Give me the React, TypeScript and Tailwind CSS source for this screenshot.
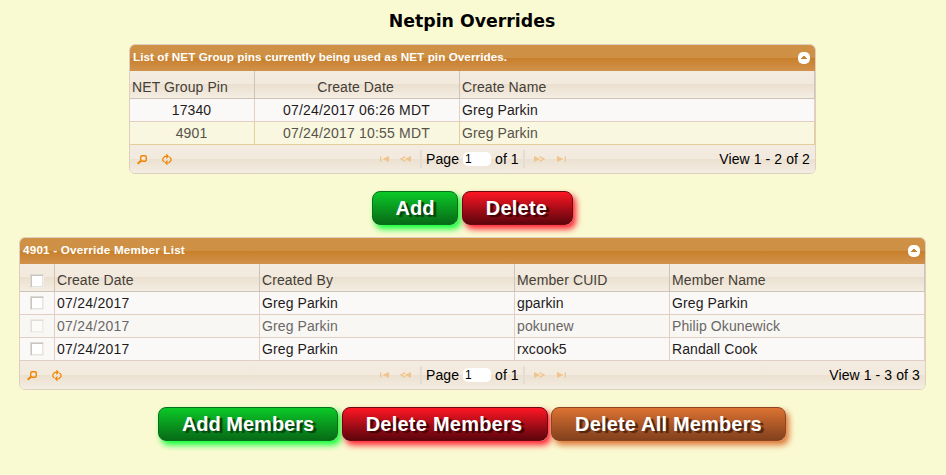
import type { ReactNode } from "react";

const SANS = "font-['Liberation_Sans',Arial,sans-serif]";

function CollapseIcon() {
  return (
    <svg className="h-3 w-3" viewBox="0 0 12 12">
      <rect width="12" height="12" rx="5" fill="#fff" />
      <path d="M3 7V6h1V5h1V4h2v1h1v1h1v1z" fill="#c9832f" />
    </svg>
  );
}

function SearchIcon() {
  return (
    <svg className="h-[11px] w-[11px]" viewBox="0 0 11 11" fill="none" stroke="#ef8403">
      <rect x="3.700" y="1.700" width="5.600" height="5.600" rx="1.500" strokeWidth="1.400" />
      <path d="M4 6.700L.7 9.700" strokeWidth="2" />
    </svg>
  );
}

function RefreshIcon() {
  return (
    <svg className="h-[11px] w-[10px]" viewBox="0 0 10 11" fill="none" stroke="#ef8403">
      <path
        d="M2.500 8.200L.8 6.500V4.500L2.800 2.300H6M4.300 .3L6.200 2.300L4.300 4.300M7.300 2.800L9 4.500V6.500L7 8.700H4M5.500 6.700L3.600 8.700L5.500 10.700"
        strokeWidth="1.150"
      />
    </svg>
  );
}

function FirstIcon({ flip = false }: { flip?: boolean }) {
  return (
    <svg className={flip ? "h-[6px] w-[9px] -scale-x-100" : "h-[6px] w-[9px]"} viewBox="0 0 9 6" fill="#f1c48d">
      <path d="M0 .5h1.300v5H0zM2.500 3L9 .1v5.800z" />
    </svg>
  );
}

function PrevIcon({ flip = false }: { flip?: boolean }) {
  return (
    <svg className={flip ? "h-[6px] w-[11px] -scale-x-100" : "h-[6px] w-[11px]"} viewBox="0 0 11 6">
      <path d="M5.500 .7L1 3l4.500 2.300" fill="none" stroke="#f1c48d" strokeWidth="1.300" />
      <path d="M4.800 3L11 .1v5.800z" fill="#f1c48d" />
    </svg>
  );
}

function Panel({ title, titleSpacing, width, children }: {
  title: string; titleSpacing: string; width: string; children: ReactNode;
}) {
  return (
    <section className={`${width} overflow-hidden rounded-md border border-[#dfcfc0] bg-[#fbf9f7]`}>
      <header className="flex h-[26px] items-center justify-between bg-[linear-gradient(#cf9145_0,#ce9044_50%,#c87f2a_50%,#d1924c_100%)] pl-[3px] pr-[5px] text-white">
        <span className={`pb-[3px] text-[11.7px] font-bold ${titleSpacing}`}>{title}</span>
        <CollapseIcon />
      </header>
      {children}
    </section>
  );
}

function HeaderRow({ children }: { children: ReactNode }) {
  return (
    <div className="flex h-7 border-b border-[#cdc3b7] bg-[linear-gradient(#f4ebe1_0,#f3eade_50%,#ebe0d0_50%,#f4ede2_100%)] text-[#453e37]">
      {children}
    </div>
  );
}

function Cell({ width, children, head = false, center = false, line = "border-[#e0cfc2]" }: {
  width: string; children?: ReactNode; head?: boolean; center?: boolean; line?: string;
}) {
  return (
    <div
      className={`${width} flex shrink-0 items-center whitespace-nowrap border-r pl-[2px] ${head ? "border-[#cdc3b7] pt-[5px]" : line} ${center ? "justify-center" : ""} ${center && head ? "pr-[5px]" : "pr-[3px]"}`}
    >
      {children}
    </div>
  );
}

function Box({ faded = false, place = "mb-px" }: { faded?: boolean; place?: string }) {
  return (
    <span
      className={`${place} block h-[14px] w-[14px] shrink-0 border border-b-[#f1eeea] border-r-[#f1eeea] bg-white shadow-[inset_1px_1px_0_#c9c6bf,inset_-1px_-1px_0_#e6e3dd] ${faded ? "border-l-[#e2dfda] border-t-[#e2dfda] opacity-50" : "border-l-[#dcd9d3] border-t-[#dcd9d3]"}`}
    />
  );
}

function Pager({ view, lead }: { view: string; lead: string }) {
  return (
    <footer className="flex h-7 items-center bg-[linear-gradient(#f4ebe1_0,#f3eade_50%,#ebe0d0_50%,#f4ede2_100%)] text-black">
      <div className="flex w-[120px] items-center gap-[14px] pl-[7px]">
        <SearchIcon />
        <RefreshIcon />
      </div>
      <div className={`${lead} flex items-center`}>
        <FirstIcon />
        <span className="ml-[11px]"><PrevIcon /></span>
        <span className="ml-[9px] h-[18px] w-[2px] bg-[#e4ddd4]" />
        <span className="ml-[4px] w-[37px]">Page</span>
        <span className="flex h-[14px] w-7 items-center rounded-[5px] bg-white pl-[2px] text-[12px]">1</span>
        <span className="ml-[4px] w-7">of 1</span>
        <span className="h-[18px] w-[2px] bg-[#e4ddd4]" />
        <span className="ml-[9px]"><PrevIcon flip /></span>
        <span className="ml-[12px]"><FirstIcon flip /></span>
      </div>
      <span className="ml-auto pr-[5px]">{view}</span>
    </footer>
  );
}

function Button({ children, look }: { children: ReactNode; look: string }) {
  return (
    <button className={`h-[34px] shrink-0 whitespace-nowrap rounded-lg border text-[20px] font-bold leading-8 text-white ${look}`}>
      {children}
    </button>
  );
}

const GREEN = "tracking-normal border-[#08701a] bg-linear-to-b from-[#0bc928] to-[#076b16] [text-shadow:3px_2px_1px_#064410] shadow-[3px_4px_6px_#0aff32]";
const RED = "pr-[2px] tracking-[0.23px] border-[#6b0712] bg-linear-to-b from-[#ff1624] to-[#5e050c] [text-shadow:3px_2px_1px_#3d0308] shadow-[3px_4px_6px_#ff1e30]";
const BROWN = "tracking-[0.17px] border-[#8d4620] bg-linear-to-b from-[#dc7333] to-[#83401d] [text-shadow:3px_2px_1px_#4d2510] shadow-[3px_4px_6px_#dc7333]";

const members = [
  ["07/24/2017", "Greg Parkin", "gparkin", "Greg Parkin"],
  ["07/24/2017", "Greg Parkin", "pokunew", "Philip Okunewick"],
  ["07/24/2017", "Greg Parkin", "rxcook5", "Randall Cook"],
];

export default function App() {
  return (
    <main className={`${SANS} h-[475px] w-[946px] overflow-hidden bg-[#fafad2] text-[14px] leading-[16px] tracking-[0.1px]`}>
      <h1 className="h-11 pr-[2px] pt-[9px] text-center font-['DejaVu_Sans',sans-serif] text-[17.330px] font-bold leading-6 tracking-normal text-black">
        Netpin Overrides
      </h1>
      <div className="pl-[129px]">
        <Panel title="List of NET Group pins currently being used as NET pin Overrides." titleSpacing="tracking-[0.060px]" width="w-[687px]">
          <HeaderRow>
            <Cell head width="w-[125px]">NET Group Pin</Cell>
            <Cell head center width="w-[205px]">Create Date</Cell>
            <Cell head width="w-[355px]">Create Name</Cell>
          </HeaderRow>
          <div className="flex h-[23px] border-b border-[#e0cfc2] text-[#1e1b1d]">
            <Cell center width="w-[125px]">17340</Cell>
            <Cell center width="w-[205px]"><span className="tracking-[0.18px]">07/24/2017 06:26 MDT</span></Cell>
            <Cell width="w-[355px]">Greg Parkin</Cell>
          </div>
          <div className="flex h-[23px] border-b border-[#e4cf9b] bg-[#f9f7df] text-[#57534a]">
            <Cell center width="w-[125px]" line="border-[#e4cf9b]">4901</Cell>
            <Cell center width="w-[205px]" line="border-[#e4cf9b]"><span className="tracking-[0.18px]">07/24/2017 10:55 MDT</span></Cell>
            <Cell width="w-[355px]" line="border-[#e4cf9b]">Greg Parkin</Cell>
          </div>
          <Pager view="View 1 - 2 of 2" lead="ml-[130px]" />
        </Panel>
      </div>
      <div className="flex h-[63px] gap-1 pl-[372px] pt-[17px]">
        <Button look={`w-[86px] ${GREEN}`}>Add</Button>
        <Button look={`w-[111px] ${RED}`}>Delete</Button>
      </div>
      <div className="pl-[19px]">
        <Panel title="4901 - Override Member List" titleSpacing="tracking-[0.2px]" width="w-[907px]">
          <HeaderRow>
            <Cell head center width="w-[35px]"><Box place="ml-[2px] mt-px" /></Cell>
            <Cell head width="w-[205px]">Create Date</Cell>
            <Cell head width="w-[255px]">Created By</Cell>
            <Cell head width="w-[155px]">Member CUID</Cell>
            <Cell head width="w-[255px]">Member Name</Cell>
          </HeaderRow>
          {members.map(([date, by, cuid, name], i) => (
            <div key={cuid} className={`flex h-[23px] border-b border-[#e0cfc2] ${i === 1 ? "bg-[#f9f7f3] text-[#696767]" : "text-[#1e1b1d]"}`}>
              <Cell center width="w-[35px]"><Box faded={i === 1} /></Cell>
              <Cell width="w-[205px]"><span className="tracking-[0.25px]">{date}</span></Cell>
              <Cell width="w-[255px]">{by}</Cell>
              <Cell width="w-[155px]">{cuid}</Cell>
              <Cell width="w-[255px]">{name}</Cell>
            </div>
          ))}
          <Pager view="View 1 - 3 of 3" lead="ml-[240px]" />
        </Panel>
      </div>
      <div className="flex pl-[158px] pt-[17px]">
        <Button look={`w-[180px] ${GREEN}`}>Add Members</Button>
        <Button look={`ml-1 w-[206px] ${RED}`}>Delete Members</Button>
        <Button look={`ml-[3px] w-[235px] ${BROWN}`}>Delete All Members</Button>
      </div>
    </main>
  );
}
